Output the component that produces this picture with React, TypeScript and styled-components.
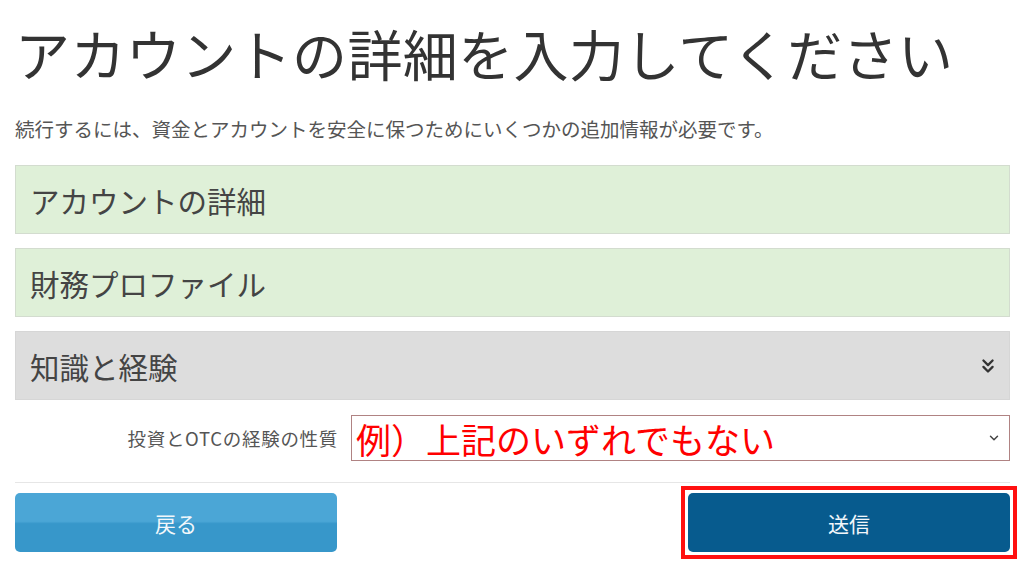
import * as React from 'react'
import styled, { createGlobalStyle } from 'styled-components'
import { ChevronsDown, ChevronDown } from 'lucide-react'

const GlobalStyle = createGlobalStyle`
  html, body {
    margin: 0;
    padding: 0;
    background: #fff;
  }
  body {
    font-family: "Noto Sans CJK JP", "Noto Sans", sans-serif;
    color: #333;
  }
`

const Page = styled.div`
  width: 995px;
  padding: 0 0 0 15px;
`

const Title = styled.h1`
  margin: 0;
  padding-top: 12px;
  font-size: 55px;
  line-height: 80px;
  font-weight: 400;
  color: #333;
  letter-spacing: 0.4px;
`

const Lead = styled.p`
  margin: 23px 0 0;
  font-size: 19.5px;
  line-height: 28px;
  color: #555;
`

const Panels = styled.div`
  display: flex;
  flex-direction: column;
  gap: 14px;
  margin-top: 22px;
`

const Panel = styled.div<{ $tone: 'done' | 'open' }>`
  height: 69px;
  box-sizing: border-box;
  display: flex;
  align-items: center;
  justify-content: space-between;
  padding: 0 10px 0 14px;
  background: ${(p) => (p.$tone === 'done' ? '#dff0d8' : '#dddddd')};
  border: 1px solid ${(p) => (p.$tone === 'done' ? '#d3dccf' : '#d6d6d6')};
  font-size: 29.5px;
  color: #444;
`

const FieldRow = styled.div`
  display: grid;
  grid-template-columns: 323px 1fr;
  column-gap: 13px;
  align-items: center;
  margin-top: 15px;
`

const Label = styled.label`
  text-align: right;
  font-size: 18.5px;
  letter-spacing: 0.7px;
  color: #555;
`

const SelectBox = styled.div`
  height: 46px;
  box-sizing: border-box;
  border: 1px solid #b08383;
  display: flex;
  align-items: center;
  justify-content: space-between;
  padding: 0 8px 0 4px;
  color: #ff0000;
  font-size: 35px;
  background: #fff;
`

const Divider = styled.hr`
  margin: 21px 0 0;
  border: 0;
  border-top: 1px solid #e6e6e6;
`

const Actions = styled.div`
  display: flex;
  justify-content: space-between;
  align-items: center;
  margin-top: 3px;
`

const Button = styled.button<{ $variant: 'back' | 'submit' }>`
  width: 322px;
  height: 59px;
  border: 0;
  border-radius: 5px;
  font-family: inherit;
  font-size: 21px;
  color: #f2f7fb;
  cursor: pointer;
  background: ${(p) =>
    p.$variant === 'back'
      ? 'linear-gradient(#4ba6d6 0%, #4ba6d6 48%, #3797ca 52%, #3797ca 100%)'
      : '#075b8e'};
`

const Highlight = styled.div`
  border: 4px solid #ff1010;
  padding: 3px;
  margin-right: -7px;
  display: flex;
`

export default function App() {
  return (
    <Page>
      <GlobalStyle />
      <Title>アカウントの詳細を入力してください</Title>
      <Lead>続行するには、資金とアカウントを安全に保つためにいくつかの追加情報が必要です。</Lead>
      <Panels>
        <Panel $tone="done">アカウントの詳細</Panel>
        <Panel $tone="done">財務プロファイル</Panel>
        <Panel $tone="open">
          知識と経験
          <ChevronsDown size={22} strokeWidth={2.5} color="#333" />
        </Panel>
      </Panels>
      <FieldRow>
        <Label>投資とOTCの経験の性質</Label>
        <SelectBox>
          例）上記のいずれでもない
          <ChevronDown size={14} strokeWidth={2.5} color="#444" />
        </SelectBox>
      </FieldRow>
      <Divider />
      <Actions>
        <Button $variant="back">戻る</Button>
        <Highlight>
          <Button $variant="submit">送信</Button>
        </Highlight>
      </Actions>
    </Page>
  )
}
